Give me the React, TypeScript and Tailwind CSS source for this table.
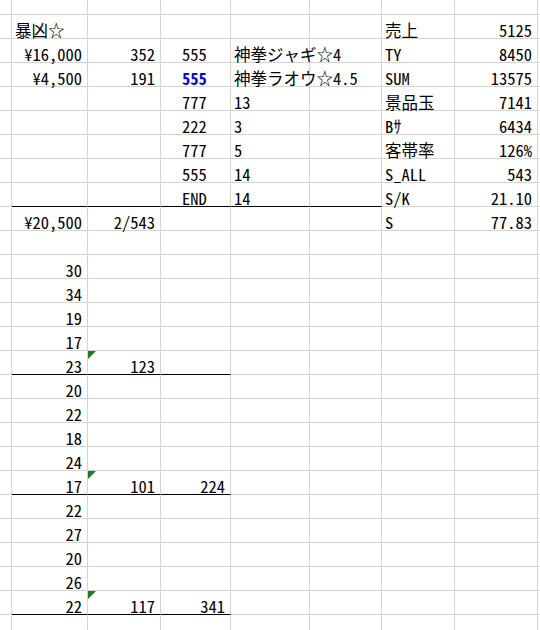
import React from "react";

const W = [
  "w-[12px]",
  "w-[76px]",
  "w-[73px]",
  "w-[70px]",
  "w-[79px]",
  "w-[72px]",
  "w-[73px]",
  "w-[83px]",
  "w-[2px]",
];

type C = { t: string; a: "l" | "r" | "i"; blue?: boolean; tri?: boolean };
type R = { c: Record<number, C>; black?: number[] };

const r = (t: string): C => ({ t, a: "r" });
const l = (t: string): C => ({ t, a: "l" });
const ind = (t: string, blue?: boolean): C => ({ t, a: "i", blue });

const rows: R[] = [
  { c: { 1: l("暴凶☆"), 6: l("売上"), 7: r("5125") } },
  { c: { 1: r("¥16,000"), 2: r("352"), 3: ind("555"), 4: l("神拳ジャギ☆4"), 6: l("TY"), 7: r("8450") } },
  { c: { 1: r("¥4,500"), 2: r("191"), 3: ind("555", true), 4: l("神拳ラオウ☆4.5"), 6: l("SUM"), 7: r("13575") } },
  { c: { 3: ind("777"), 4: l("13"), 6: l("景品玉"), 7: r("7141") } },
  { c: { 3: ind("222"), 4: l("3"), 6: l("Bｻ"), 7: r("6434") } },
  { c: { 3: ind("777"), 4: l("5"), 6: l("客帯率"), 7: r("126%") } },
  { c: { 3: ind("555"), 4: l("14"), 6: l("S_ALL"), 7: r("543") } },
  { c: { 3: ind("END"), 4: l("14"), 6: l("S/K"), 7: r("21.10") }, black: [1, 2, 3, 4, 5] },
  { c: { 1: r("¥20,500"), 2: r("2/543"), 6: l("S"), 7: r("77.83") } },
  { c: {} },
  { c: { 1: r("30") } },
  { c: { 1: r("34") } },
  { c: { 1: r("19") } },
  { c: { 1: r("17") } },
  { c: { 1: r("23"), 2: { t: "123", a: "r", tri: true } }, black: [1, 2, 3] },
  { c: { 1: r("20") } },
  { c: { 1: r("22") } },
  { c: { 1: r("18") } },
  { c: { 1: r("24") } },
  { c: { 1: r("17"), 2: { t: "101", a: "r", tri: true }, 3: r("224") }, black: [1, 2, 3] },
  { c: { 1: r("22") } },
  { c: { 1: r("27") } },
  { c: { 1: r("20") } },
  { c: { 1: r("26") } },
  { c: { 1: r("22"), 2: { t: "117", a: "r", tri: true }, 3: r("341") }, black: [1, 2, 3] },
];

function Cell({ i, cell, black, h }: { i: number; cell?: C; black?: boolean; h: string }) {
  const last = i === 8;
  const align = !cell
    ? ""
    : cell.a === "r"
    ? "justify-end pr-[5px]"
    : cell.a === "i"
    ? "justify-start pl-[21px]"
    : "justify-start pl-[3px]";
  return (
    <div
      className={`relative flex items-end shrink-0 ${h} ${W[i]} ${last ? "" : "border-r border-r-[#d4d4d4]"} border-b ${
        black ? "border-b-black" : "border-b-[#d4d4d4]"
      } ${align}`}
    >
      {cell?.tri && (
        <div className="absolute top-0 left-0 w-0 h-0 border-t-[8px] border-r-[8px] border-t-[#1b7d1b] border-r-transparent" />
      )}
      {cell && (
        <span
          className={`whitespace-nowrap leading-[16px] ${
            cell.blue ? "text-[#0a0ad8] font-bold" : "text-black"
          }`}
        >
          {cell.t}
        </span>
      )}
    </div>
  );
}

function Row({ row, h }: { row?: R; h: string }) {
  return (
    <div className="flex">
      {W.map((_, i) => (
        <Cell key={i} i={i} cell={row?.c[i]} black={row?.black?.includes(i)} h={h} />
      ))}
    </div>
  );
}

export default function App() {
  return (
    <div
      className="w-[540px] h-[630px] overflow-hidden bg-white text-[16.5px]"
      style={{ fontFamily: '"Noto Sans Mono CJK JP", "Noto Sans CJK JP", monospace' }}
    >
      <Row h="h-[15px]" />
      {rows.map((row, k) => (
        <Row key={k} row={row} h="h-[24px]" />
      ))}
      <Row h="h-[24px]" />
    </div>
  );
}
